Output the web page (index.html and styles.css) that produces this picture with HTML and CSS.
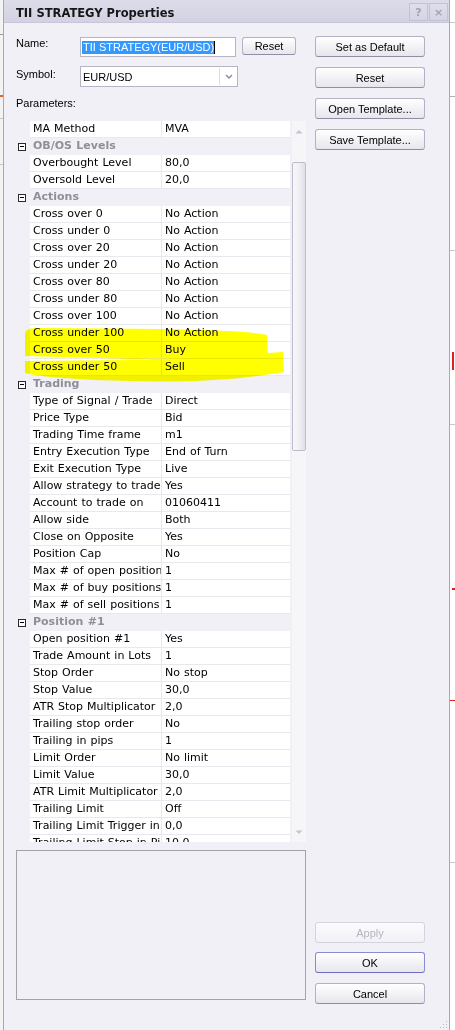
FILE: index.html
```html
<!DOCTYPE html>
<html>
<head>
<meta charset="utf-8">
<title>TII STRATEGY Properties</title>
<link rel="stylesheet" href="styles.css">
</head>
<body>
<div class="screen">
  <div class="bg-left"></div>
  <div class="dialog">
    <div class="titlebar">
      <span class="title">TII STRATEGY Properties</span>
      <div class="tbtns"><span class="tbtn">?</span><span class="tbtn">×</span></div>
    </div>
    <div class="content">
      <div class="left">
        <div class="name-row">
          <label class="lbl">Name:</label>
          <div class="input"><span class="sel">TII STRATEGY(EUR/USD)</span><span class="caret"></span></div>
          <button class="btn small">Reset</button>
        </div>
        <div class="symbol-row">
          <label class="lbl">Symbol:</label>
          <div class="select"><span class="sval">EUR/USD</span><span class="drop"><svg width="8" height="5" viewBox="0 0 8 5"><path d="M1 1 L4 4 L7 1" fill="none" stroke="#8a90a8" stroke-width="1.5"/></svg></span></div>
        </div>
        <div class="params-label">Parameters:</div>
        <div class="grid">
          <div class="rows">
            <div class="row"><span class="exp"></span><span class="k">MA Method</span><span class="v">MVA</span></div>
            <div class="row cat"><span class="exp"><i class="box"></i></span><span class="k">OB/OS Levels</span></div>
            <div class="row"><span class="exp"></span><span class="k">Overbought Level</span><span class="v">80,0</span></div>
            <div class="row"><span class="exp"></span><span class="k">Oversold Level</span><span class="v">20,0</span></div>
            <div class="row cat"><span class="exp"><i class="box"></i></span><span class="k">Actions</span></div>
            <div class="row"><span class="exp"></span><span class="k">Cross over 0</span><span class="v">No Action</span></div>
            <div class="row"><span class="exp"></span><span class="k">Cross under 0</span><span class="v">No Action</span></div>
            <div class="row"><span class="exp"></span><span class="k">Cross over 20</span><span class="v">No Action</span></div>
            <div class="row"><span class="exp"></span><span class="k">Cross under 20</span><span class="v">No Action</span></div>
            <div class="row"><span class="exp"></span><span class="k">Cross over 80</span><span class="v">No Action</span></div>
            <div class="row"><span class="exp"></span><span class="k">Cross under 80</span><span class="v">No Action</span></div>
            <div class="row"><span class="exp"></span><span class="k">Cross over 100</span><span class="v">No Action</span></div>
            <div class="row"><span class="exp"></span><span class="k">Cross under 100</span><span class="v">No Action</span></div>
            <div class="row"><span class="exp"></span><span class="k">Cross over 50</span><span class="v">Buy</span></div>
            <div class="row"><span class="exp"></span><span class="k">Cross under 50</span><span class="v">Sell</span></div>
            <div class="row cat"><span class="exp"><i class="box"></i></span><span class="k">Trading</span></div>
            <div class="row"><span class="exp"></span><span class="k">Type of Signal / Trade</span><span class="v">Direct</span></div>
            <div class="row"><span class="exp"></span><span class="k">Price Type</span><span class="v">Bid</span></div>
            <div class="row"><span class="exp"></span><span class="k">Trading Time frame</span><span class="v">m1</span></div>
            <div class="row"><span class="exp"></span><span class="k">Entry Execution Type</span><span class="v">End of Turn</span></div>
            <div class="row"><span class="exp"></span><span class="k">Exit Execution Type</span><span class="v">Live</span></div>
            <div class="row"><span class="exp"></span><span class="k">Allow strategy to trade</span><span class="v">Yes</span></div>
            <div class="row"><span class="exp"></span><span class="k">Account to trade on</span><span class="v">01060411</span></div>
            <div class="row"><span class="exp"></span><span class="k">Allow side</span><span class="v">Both</span></div>
            <div class="row"><span class="exp"></span><span class="k">Close on Opposite</span><span class="v">Yes</span></div>
            <div class="row"><span class="exp"></span><span class="k">Position Cap</span><span class="v">No</span></div>
            <div class="row"><span class="exp"></span><span class="k">Max # of open positions</span><span class="v">1</span></div>
            <div class="row"><span class="exp"></span><span class="k">Max # of buy positions</span><span class="v">1</span></div>
            <div class="row"><span class="exp"></span><span class="k">Max # of sell positions</span><span class="v">1</span></div>
            <div class="row cat"><span class="exp"><i class="box"></i></span><span class="k">Position #1</span></div>
            <div class="row"><span class="exp"></span><span class="k">Open position #1</span><span class="v">Yes</span></div>
            <div class="row"><span class="exp"></span><span class="k">Trade Amount in Lots</span><span class="v">1</span></div>
            <div class="row"><span class="exp"></span><span class="k">Stop Order</span><span class="v">No stop</span></div>
            <div class="row"><span class="exp"></span><span class="k">Stop Value</span><span class="v">30,0</span></div>
            <div class="row"><span class="exp"></span><span class="k">ATR Stop Multiplicator</span><span class="v">2,0</span></div>
            <div class="row"><span class="exp"></span><span class="k">Trailing stop order</span><span class="v">No</span></div>
            <div class="row"><span class="exp"></span><span class="k">Trailing in pips</span><span class="v">1</span></div>
            <div class="row"><span class="exp"></span><span class="k">Limit Order</span><span class="v">No limit</span></div>
            <div class="row"><span class="exp"></span><span class="k">Limit Value</span><span class="v">30,0</span></div>
            <div class="row"><span class="exp"></span><span class="k">ATR Limit Multiplicator</span><span class="v">2,0</span></div>
            <div class="row"><span class="exp"></span><span class="k">Trailing Limit</span><span class="v">Off</span></div>
            <div class="row"><span class="exp"></span><span class="k">Trailing Limit Trigger in pips</span><span class="v">0,0</span></div>
            <div class="row"><span class="exp"></span><span class="k">Trailing Limit Stop in Pips</span><span class="v">10,0</span></div>
          </div>
          <div class="scrollbar">
            <span class="arrow up"><svg width="8" height="5" viewBox="0 0 8 5"><path d="M0.5 4.5 L4 1 L7.5 4.5 Z" fill="#c4c4d2"/></svg></span>
            <span class="thumb"></span>
            <span class="track"></span>
            <span class="arrow down"><svg width="8" height="5" viewBox="0 0 8 5"><path d="M0.5 0.5 L4 4 L7.5 0.5 Z" fill="#c4c4d2"/></svg></span>
          </div>
          <svg class="highlight" width="290" height="721" viewBox="0 0 290 721">
            <path d="M9,213 C9,208 14,207 24,207 L144,208 C194,209 234,210 251,214 L252,235 L119,238 L9,235 Z" fill="#ffff00"/>
            <path d="M9,240 L119,239 L252,232 L267,231 L268,251 C234,257 184,262 114,260 C64,259 24,256 9,252 Z" fill="#ffff00"/>
          </svg>
        </div>
        <div class="desc"></div>
      </div>
      <div class="right">
        <button class="btn">Set as Default</button>
        <button class="btn gap">Reset</button>
        <button class="btn gap">Open Template...</button>
        <button class="btn gap">Save Template...</button>
        <button class="btn apply">Apply</button>
        <button class="btn ok">OK</button>
        <button class="btn cancel">Cancel</button>
      </div>
    </div>
    <span class="grip"></span>
  </div>
  <div class="bg-right"></div>
</div>
</body>
</html>
```

FILE: styles.css
```css
html, body {
  margin: 0;
  padding: 0;
}
body {
  width: 455px;
  height: 1030px;
  overflow: hidden;
  background: #ffffff;
  font-family: "Liberation Sans", Arial, sans-serif;
  font-size: 11px;
  color: #000;
}
.screen {
  display: flex;
  height: 1030px;
}
.bg-left {
  width: 3px;
  flex: none;
  background:
    linear-gradient(#9a9a9a, #9a9a9a) 0 34px / 3px 1px no-repeat,
    linear-gradient(#e06030, #e06030) 0 95px / 3px 2px no-repeat,
    linear-gradient(#c8c8c8, #c8c8c8) 0 118px / 3px 1px no-repeat,
    linear-gradient(#c8c8c8, #c8c8c8) 0 164px / 3px 1px no-repeat,
    #f3f3f3;
}
.bg-right {
  width: 5px;
  flex: none;
  background:
    linear-gradient(#c8c8d0, #c8c8d0) 0 22px / 5px 1px no-repeat,
    linear-gradient(#b0b0b0, #b0b0b0) 0 96px / 5px 1px no-repeat,
    linear-gradient(#c8c8c8, #c8c8c8) 0 250px / 5px 1px no-repeat,
    linear-gradient(#e02020, #e02020) 2px 352px / 2px 18px no-repeat,
    linear-gradient(#c8c8c8, #c8c8c8) 0 424px / 5px 1px no-repeat,
    linear-gradient(#e02020, #e02020) 2px 588px / 3px 2px no-repeat,
    linear-gradient(#e02020, #e02020) 0 700px / 5px 1px no-repeat,
    linear-gradient(#c8c8c8, #c8c8c8) 0 862px / 5px 1px no-repeat,
    #ffffff;
}
.dialog {
  position: relative;
  width: 447px;
  flex: none;
  box-sizing: border-box;
  border-left: 1px solid #a6a6bc;
  border-right: 1px solid #a6a6bc;
  background: #f1f0f6;
  display: flex;
  flex-direction: column;
}
.titlebar {
  height: 22px;
  flex: none;
  border-bottom: 1px solid #c6c6d8;
  background: linear-gradient(#dcdcea, #d2d2e2);
  display: flex;
  align-items: flex-start;
  padding-left: 12px;
  padding-right: 1px;
}
.title {
  font-family: "DejaVu Sans", Verdana, sans-serif;
  font-weight: bold;
  font-size: 11.5px;
  line-height: 14px;
  color: #161616;
  flex: 1;
  margin-top: 6px;
}
.tbtns {
  display: flex;
  gap: 1px;
  margin-top: 3px;
}
.tbtn {
  width: 19px;
  height: 18px;
  box-sizing: border-box;
  border: 1px solid #c2c2d4;
  background: linear-gradient(#dedeec, #d4d4e4);
  color: #a2a2ba;
  font-family: "DejaVu Sans", sans-serif;
  font-weight: bold;
  font-size: 11px;
  display: flex;
  align-items: center;
  justify-content: center;
}
.content {
  flex: 1;
  display: flex;
}
.left {
  width: 290px;
  margin-left: 12px;
  display: flex;
  flex-direction: column;
}
.lbl {
  width: 64px;
  flex: none;
  line-height: 13px;
}
.name-row {
  margin-top: 14px;
  height: 20px;
  display: flex;
  align-items: flex-start;
}
.input {
  width: 156px;
  height: 20px;
  box-sizing: border-box;
  border: 1px solid #b6b6c2;
  background: #fff;
  display: flex;
  align-items: center;
  padding-left: 1px;
}
.sel {
  background: #3399ff;
  color: #fff;
  line-height: 13px;
  padding: 0 0 0 1px;
}
.caret {
  width: 1px;
  height: 13px;
  background: #000;
}
.btn {
  width: 110px;
  height: 21px;
  box-sizing: border-box;
  border: 1px solid #b2b2c4;
  border-bottom-color: #8e8ea4;
  border-radius: 3px;
  background: linear-gradient(#ffffff, #f4f4f7 45%, #e6e6ec);
  font-family: "Liberation Sans", Arial, sans-serif;
  font-size: 11px;
  color: #000;
  padding: 0;
  display: flex;
  align-items: center;
  justify-content: center;
}
.btn.small {
  width: 54px;
  height: 18px;
  margin-left: 6px;
}
.symbol-row {
  margin-top: 9px;
  height: 21px;
  display: flex;
  align-items: flex-start;
}
.symbol-row .lbl {
  margin-top: 2px;
}
.select {
  width: 158px;
  height: 21px;
  box-sizing: border-box;
  border: 1px solid #b6b6c2;
  background: #fff;
  display: flex;
  align-items: center;
}
.sval {
  flex: 1;
  padding-left: 2px;
  padding-top: 1px;
}
.drop {
  width: 17px;
  height: 17px;
  border-left: 1px solid #dcdce4;
  display: flex;
  align-items: center;
  justify-content: center;
}
.params-label {
  margin-top: 10px;
  height: 13px;
  line-height: 13px;
}
.grid {
  position: relative;
  margin-top: 11px;
  height: 721px;
  display: flex;
  overflow: hidden;
}
.rows {
  width: 274px;
  flex: none;
  display: flex;
  flex-direction: column;
  font-family: "DejaVu Sans", Verdana, sans-serif;
  font-size: 11px;
  word-spacing: 0.5px;
}
.row {
  display: flex;
  height: 17px;
  flex: none;
}
.exp {
  width: 14px;
  flex: none;
  display: flex;
  align-items: center;
  padding-left: 2px;
  box-sizing: border-box;
}
.k, .v {
  height: 17px;
  box-sizing: border-box;
  border-bottom: 1px solid #e9e8ef;
  background: #fff;
  padding-left: 3px;
  line-height: 16px;
  white-space: nowrap;
  overflow: hidden;
  text-overflow: clip;
}
.k {
  width: 132px;
  border-right: 1px solid #e9e8ef;
}
.v {
  width: 128px;
}
.cat .k {
  width: 260px;
  background: transparent;
  border-right: none;
  border-bottom-color: transparent;
  font-weight: bold;
  color: #8f8f98;
}
.box {
  width: 8px;
  height: 8px;
  box-sizing: border-box;
  border: 1px solid #2a2a2a;
  position: relative;
  background: #fff;
}
.box::after {
  content: "";
  position: absolute;
  left: 1px;
  top: 2.5px;
  width: 4px;
  height: 1px;
  background: #000;
}
.scrollbar {
  width: 14px;
  margin-left: 2px;
  flex: none;
  display: flex;
  flex-direction: column;
  align-items: stretch;
  background: #f6f6f9;
}
.arrow {
  height: 20px;
  flex: none;
  display: flex;
  align-items: center;
  justify-content: center;
}
.thumb {
  height: 289px;
  margin-top: 21px;
  flex: none;
  box-sizing: border-box;
  border: 1px solid #bcbccc;
  border-radius: 2px;
  background: linear-gradient(90deg, #f8f8fb, #ececf2 60%, #dfdfe8);
}
.track {
  flex: 1;
}
.arrow.down {
  height: 14px;
  margin-bottom: 3px;
}
.highlight {
  position: absolute;
  left: 0;
  top: 0;
  pointer-events: none;
  mix-blend-mode: multiply;
}
.desc {
  margin-top: 8px;
  height: 150px;
  box-sizing: border-box;
  border: 1px solid #a2a2aa;
}
.right {
  width: 110px;
  margin-left: 9px;
  display: flex;
  flex-direction: column;
}
.right .btn:first-child {
  margin-top: 13px;
}
.right .btn.gap {
  margin-top: 10px;
}
.btn.apply {
  margin-top: auto;
  color: #b4b4c2;
  border-color: #d4d4de;
  background: linear-gradient(#fbfbfd, #f2f2f6);
}
.btn.ok {
  margin-top: 9px;
  border-color: #8a8ad4;
  border-bottom-color: #6c6cc0;
}
.btn.cancel {
  margin-top: 10px;
  margin-bottom: 26px;
}
.grip {
  position: absolute;
  right: 2px;
  bottom: 2px;
  width: 8px;
  height: 8px;
  background:
    radial-gradient(circle, #b8b8c8 0.8px, transparent 1px) 0 0 / 3px 3px;
  clip-path: polygon(100% 0, 100% 100%, 0 100%);
}
```
